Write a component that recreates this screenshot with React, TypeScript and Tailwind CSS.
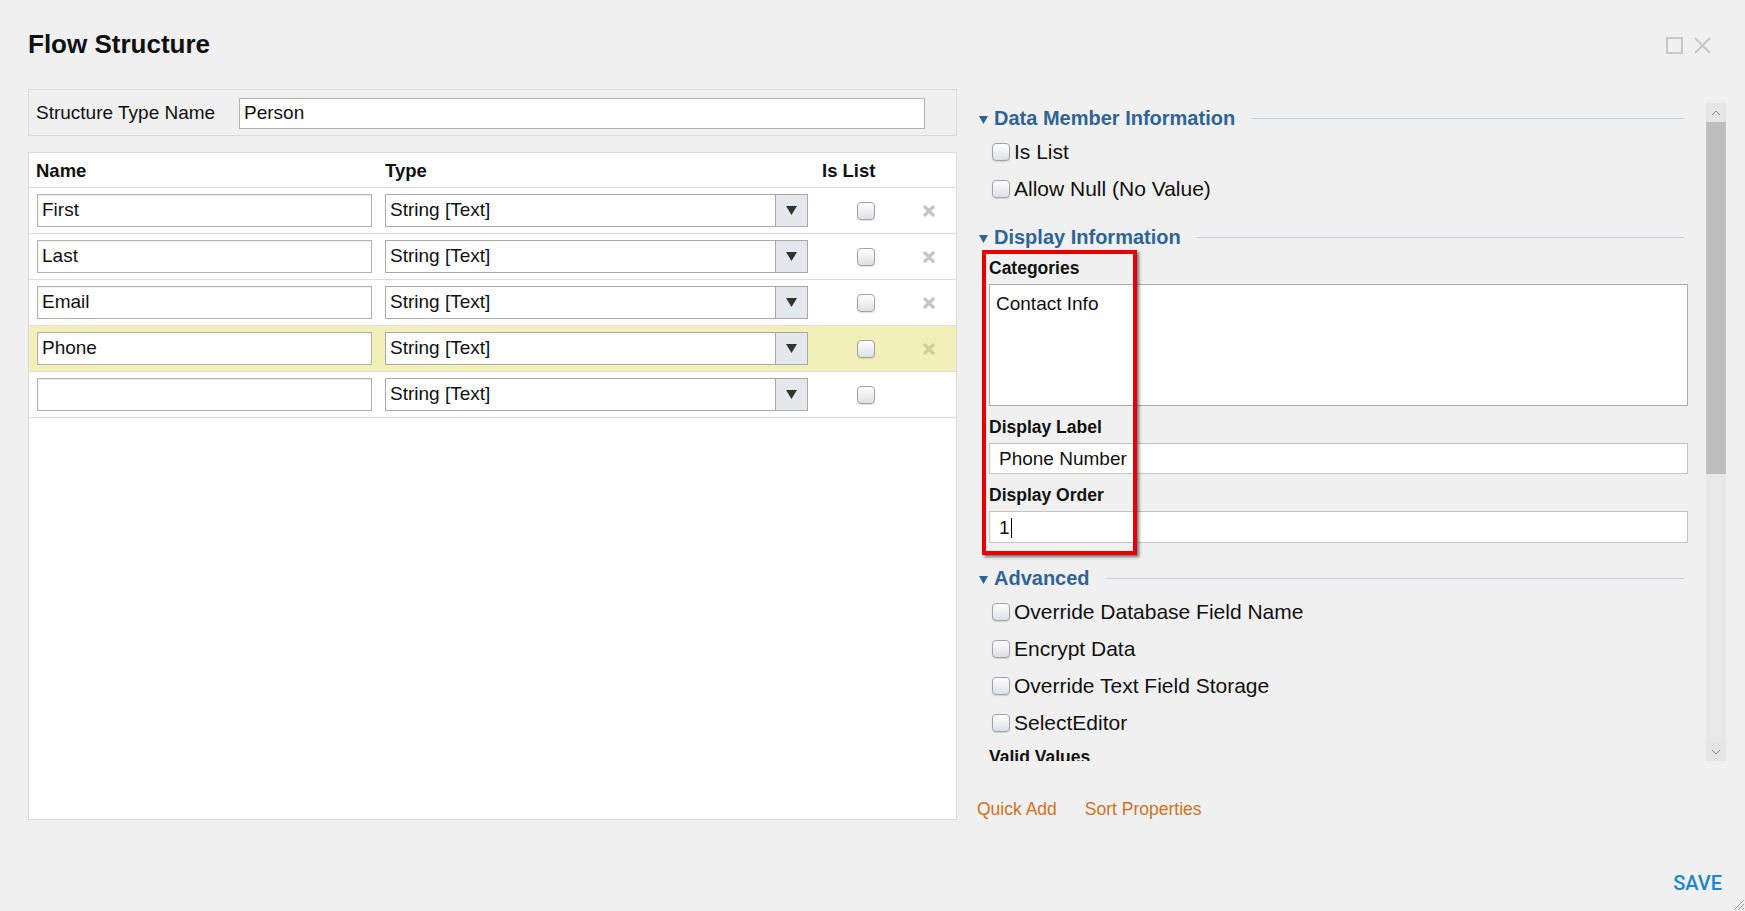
import React from "react";

// Sample rows of the structure being edited
const members = [
  { name: "First", type: "String [Text]", canDelete: true, active: false },
  { name: "Last", type: "String [Text]", canDelete: true, active: false },
  { name: "Email", type: "String [Text]", canDelete: true, active: false },
  { name: "Phone", type: "String [Text]", canDelete: true, active: true },
  { name: "", type: "String [Text]", canDelete: false, active: false },
];

function Check() {
  return (
    <span className="block shrink-0 w-[18px] h-[18px] rounded-[4px] border border-[#a2a2a2] bg-linear-to-b from-white to-[#dce0e6] shadow-[0_1px_1px_rgba(0,0,0,0.12)]" />
  );
}

function DeleteIcon({ active }: { active: boolean }) {
  return (
    <svg width="12" height="12" viewBox="0 0 12 12" className="shrink-0">
      <path
        d="M2 2 L10 10 M10 2 L2 10"
        stroke={active ? "#d3cea0" : "#c6c6c6"}
        strokeWidth="3.4"
        strokeLinecap="round"
      />
    </svg>
  );
}

function SectionHeader({ title }: { title: string }) {
  return (
    <div className="h-[30px] flex items-center pl-[2px]">
      <svg width="9" height="8" viewBox="0 0 9 8" className="mt-[4px] shrink-0">
        <polygon points="0,0 9,0 4.5,8" fill="#2f6496" />
      </svg>
      <span className="ml-[6px] text-[20px] font-bold text-[#2f6496] leading-none">{title}</span>
      <div className="flex-1 h-px bg-[#c6cfdd] ml-[16px] mr-[4px]" />
    </div>
  );
}

function CheckRow({ label }: { label: string }) {
  return (
    <div className="h-[37px] flex items-center pl-[15px] gap-[4px] text-[21px] text-[#111]">
      <Check />
      <span>{label}</span>
    </div>
  );
}

export default function App() {
  return (
    <div className="w-[1745px] h-[911px] bg-[#f0f0f0] relative overflow-hidden font-['Liberation_Sans',Arial,sans-serif] text-[#111]">
      <header className="flex justify-between h-[89px] pl-[28px] pr-[34px]">
        <h1 className="pt-[30px] text-[26px] leading-[28px] font-bold text-[#111]">Flow Structure</h1>
        <div className="flex gap-[11px] pt-[37px] h-fit">
          <span className="block w-[17px] h-[17px] border-2 border-[#c8c8c8]" />
          <svg width="17" height="17" viewBox="0 0 17 17">
            <path d="M1 1 L16 16 M16 1 L1 16" stroke="#c8c8c8" strokeWidth="2" />
          </svg>
        </div>
      </header>

      <div className="flex pl-[28px] h-[731px]">
        {/* left column */}
        <div className="w-[929px] flex flex-col">
          <div className="h-[47px] shrink-0 flex items-center pl-[7px] pt-[2px] border border-[#dadada]">
            <span className="w-[203px] text-[19px]">Structure Type Name</span>
            <div className="w-[686px] h-[31px] flex items-center pl-[4px] bg-white border border-[#b3b3b3] text-[19px]">
              Person
            </div>
          </div>

          <div className="mt-[16px] flex-1 bg-white border border-[#dadada] flex flex-col">
            <div className="h-[35px] shrink-0 flex items-center pl-[7px] pt-[2px] border-b border-[#dcdcdc] text-[18.5px] font-bold">
              <span className="w-[349px]">Name</span>
              <span className="w-[437px]">Type</span>
              <span>Is List</span>
            </div>
            {members.map((m, i) => (
              <div
                key={i}
                className={
                  "h-[46px] shrink-0 flex items-center pl-[8px] border-b border-[#dcdcdc] text-[19px] " +
                  (m.active ? "bg-[#f3efb9]" : "bg-white")
                }
              >
                <div className="w-[335px] h-[33px] flex items-center pl-[4px] bg-white border border-[#b3b3b3] shadow-[inset_1px_1px_1px_rgba(0,0,0,0.06)]">
                  {m.name}
                </div>
                <div className="ml-[13px] w-[423px] h-[33px] flex bg-white border border-[#a9a9a9]">
                  <span className="flex-1 flex items-center pl-[4px]">{m.type}</span>
                  <span className="w-[32px] flex items-center justify-center bg-[#e4e8ec] border-l border-[#a9a9a9]">
                    <svg width="11" height="9" viewBox="0 0 11 9">
                      <polygon points="0,0 11,0 5.5,9" fill="#333" />
                    </svg>
                  </span>
                </div>
                <span className="ml-[49px] flex">
                  <Check />
                </span>
                {m.canDelete && (
                  <span className="ml-[48px] flex">
                    <DeleteIcon active={m.active} />
                  </span>
                )}
              </div>
            ))}
          </div>
        </div>

        {/* right column */}
        <div className="ml-[20px] flex flex-col pt-[14px]">
          <div className="h-[659px] flex overflow-hidden">
            <div className="w-[711px]">
              <SectionHeader title="Data Member Information" />
              <CheckRow label="Is List" />
              <CheckRow label="Allow Null (No Value)" />

              <div className="mt-[15px]">
                <SectionHeader title="Display Information" />
              </div>
              <div className="h-[32px] flex items-center pl-[12px] text-[17.5px] font-bold">Categories</div>
              <div className="ml-[12px] h-[122px] bg-white border border-[#ababab] pl-[6px] pt-[5px] text-[19px]">
                Contact Info
              </div>
              <div className="h-[37px] flex items-center pt-[5px] pl-[12px] text-[17.5px] font-bold">Display Label</div>
              <div className="ml-[12px] h-[31px] flex items-center pl-[9px] pt-[2px] bg-white border border-[#c4c4c4] text-[19px]">
                Phone Number
              </div>
              <div className="h-[37px] flex items-center pt-[5px] pl-[12px] text-[17.5px] font-bold">Display Order</div>
              <div className="ml-[12px] h-[32px] flex items-center pl-[9px] pt-[2px] bg-white border border-[#c4c4c4] text-[19px]">
                <span>1</span>
                <span className="inline-block w-px h-[20px] bg-black ml-[1px]" />
              </div>

              <div className="mt-[20px]">
                <SectionHeader title="Advanced" />
              </div>
              <CheckRow label="Override Database Field Name" />
              <CheckRow label="Encrypt Data" />
              <CheckRow label="Override Text Field Storage" />
              <CheckRow label="SelectEditor" />
              <div className="h-[32px] flex items-center pl-[12px] text-[17.5px] font-bold">Valid Values</div>
            </div>

            {/* scrollbar */}
            <div className="ml-[18px] w-[20px] h-full flex flex-col bg-[#e8e8e8]">
              <div className="h-[19px] flex items-center justify-center bg-[#e6e6e6]">
                <svg width="10" height="6" viewBox="0 0 10 6">
                  <path d="M1 5 L5 1 L9 5" fill="none" stroke="#8a8a8a" strokeWidth="1" />
                </svg>
              </div>
              <div className="h-[352px] bg-[#bebebe]" />
              <div className="flex-1" />
              <div className="h-[19px] flex items-center justify-center bg-[#e4e4e4]">
                <svg width="10" height="6" viewBox="0 0 10 6">
                  <path d="M1 1 L5 5 L9 1" fill="none" stroke="#8a8a8a" strokeWidth="1" />
                </svg>
              </div>
            </div>
          </div>

          <div className="mt-[37px] flex gap-[28px] text-[17.5px] leading-[22px] text-[#d2701f]">
            <span>Quick Add</span>
            <span>Sort Properties</span>
          </div>
        </div>
      </div>

      <div className="flex justify-end pr-[23px] mt-[51px]">
        <span className="font-['Roboto',sans-serif] font-medium text-[20px] leading-[24px] text-[#1a87d0]">SAVE</span>
      </div>

      {/* annotation box around the labels */}
      <div className="absolute left-[982px] top-[250px] w-[155px] h-[305px] border-4 border-[#e60000] shadow-[2px_2px_3px_rgba(0,0,0,0.55)] pointer-events-none" />

      {/* resize grip */}
      <svg width="14" height="14" viewBox="0 0 14 14" className="absolute right-0 bottom-0">
        <path d="M13 3 L3 13 M13 7 L7 13 M13 11 L11 13" stroke="#999" strokeWidth="1" />
      </svg>
    </div>
  );
}
